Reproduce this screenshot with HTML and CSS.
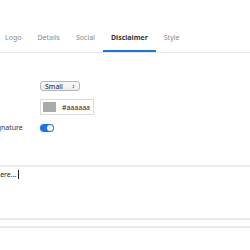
FILE: index.html
```html
<!DOCTYPE html>
<html lang="en">
  <head>
    <meta charset="UTF-8" />
    <title>Signature Editor</title>
    <link rel="stylesheet" href="styles.css">
  </head>
  <body>
    <div class="editor">
      <nav class="tabs">
        <div class="tab">Logo</div>
        <div class="tab">Details</div>
        <div class="tab">Social</div>
        <div class="tab active">Disclaimer</div>
        <div class="tab">Style</div>
      </nav>

      <div class="form">
        <div class="row row-select">
          <label class="label">Font size</label>
          <div class="select">Small <span class="arrows">&#x2195;</span></div>
        </div>

        <div class="row row-color">
          <label class="label">Text color</label>
          <div class="color">
            <span class="swatch"></span>
            <span class="hex">#aaaaaa</span>
          </div>
        </div>

        <div class="row row-toggle">
          <label class="label">Show in signature</label>
          <span class="toggle"><span class="knob"></span></span>
        </div>
      </div>

      <div class="textarea">
        <span class="placeholder">Type your disclaimer here...</span><span class="caret"></span>
      </div>
      <div class="bottom-line"></div>
    </div>
  </body>
</html>
```

FILE: styles.css
```css
* {
  margin: 0;
  padding: 0;
  box-sizing: border-box;
}

body {
  font-family: "Noto Sans", sans-serif;
  font-size: 7px;
  color: #333;
  background: #fff;
  width: 250px;
  height: 250px;
  overflow: hidden;
}

.editor {
  padding-top: 30px;
}

.tabs {
  display: flex;
  margin-left: -3px;
  border-bottom: 1px solid #e6e6e6;
}

.tab {
  padding: 3px 8px 7px;
  color: #8a8a8a;
  border-bottom: 2px solid transparent;
  line-height: 10px;
}

.tab.active {
  color: #333;
  font-weight: bold;
  border-bottom-color: #1a73e8;
}

.form {
  display: flex;
  flex-direction: column;
  margin-left: -36px;
  padding-top: 28px;
}

.row {
  display: grid;
  grid-template-columns: 76px auto;
  align-items: center;
}

.label {
  color: #333;
  white-space: nowrap;
}

.select {
  display: flex;
  justify-content: space-between;
  align-items: center;
  width: 40px;
  height: 10px;
  padding: 0 4px;
  border: 1px solid #b5b5b5;
  border-radius: 3px;
  background: linear-gradient(#fafafa, #ececec);
  color: #222;
}

.arrows {
  font-size: 6px;
}

.row-color {
  margin-top: 8px;
}

.color {
  display: flex;
  align-items: center;
  gap: 6px;
  width: 54px;
  height: 16px;
  padding: 0 3px 0 2px;
  border: 1px solid #dcdcdc;
  background: #fff;
}

.swatch {
  width: 16px;
  height: 10px;
  background: #aaa;
}

.hex {
  color: #222;
}

.row-toggle {
  margin-top: 8px;
}

.toggle {
  display: flex;
  justify-content: flex-end;
  align-items: center;
  width: 14px;
  height: 8px;
  padding: 1px;
  border-radius: 4px;
  background: #1a73e8;
}

.knob {
  width: 6px;
  height: 6px;
  border-radius: 50%;
  background: #fff;
}

.textarea {
  display: flex;
  align-items: flex-start;
  margin-top: 33px;
  margin-left: -76px;
  height: 55px;
  padding: 3px 2px;
  border-top: 2px solid #ebebeb;
  border-bottom: 2px solid #ebebeb;
  color: #222;
  line-height: 10px;
  white-space: nowrap;
}

.caret {
  width: 1px;
  height: 9px;
  margin-left: 2px;
  background: #222;
}

.bottom-line {
  margin-top: 6px;
  border-top: 2px solid #ebebeb;
}
```
